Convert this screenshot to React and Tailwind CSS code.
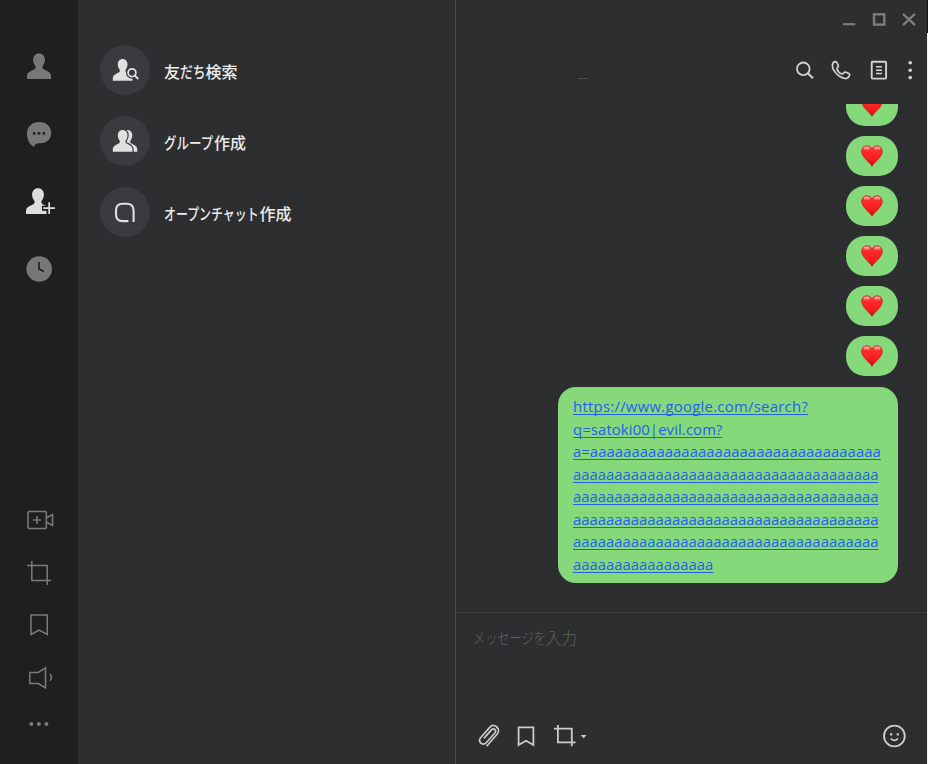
import React from 'react';

// Every icon is authored on one shared canvas; `box` selects the region it occupies.
function Icon({ box, className = '', children, stroke = 1.5 }) {
  const [, , w, h] = box.split(' ');
  return (
    <svg
      viewBox={box}
      width={w}
      height={h}
      fill="none"
      stroke="currentColor"
      strokeWidth={stroke}
      className={`block shrink-0 ${className}`}
    >
      {children}
    </svg>
  );
}

const PERSON =
  'M12 0C15.5 0 17.9 2.6 17.9 6.1C17.9 8.9 16.9 10.8 15.8 12.3C15.2 13.3 15.3 15 16.3 15.6C17.9 16.6 20.3 17.4 22 18.7C23.6 19.9 24 21.5 24 23.2V25.6H0V23.2C0 21.5 .4 19.9 2 18.7C3.7 17.4 6.1 16.6 7.7 15.6C8.7 15 8.8 13.3 8.2 12.3C7.1 10.8 6.1 8.9 6.1 6.1C6.1 2.6 8.5 0 12 0Z';

function Sidebar() {
  return (
    <nav className="flex w-[78px] shrink-0 flex-col justify-between bg-[#1f1f1f] pt-[50px] pb-[34px] text-[#777777]">
      <div className="flex flex-col gap-[38px]">
        <Icon box="0 50 78 30">
          <path d={PERSON} transform="translate(27 53.4)" fill="currentColor" stroke="none" />
        </Icon>
        <Icon box="0 118 78 30">
          <path
            d="M39.200 122C46.200 122 51.200 126.600 51.200 133C51.200 139.200 46.500 143.300 40.500 143.300C38 143.300 35.500 143.200 33.700 147C29.500 144 27 139.500 27 133.500C27 126.600 32.200 122 39.200 122Z"
            fill="currentColor"
            stroke="none"
          />
          <g fill="#1f1f1f" stroke="none">
            <circle cx="34.2" cy="133.4" r="1.4" />
            <circle cx="39" cy="133.400" r="1.4" />
            <circle cx="43.8" cy="133.400" r="1.4" />
          </g>
        </Icon>
        <Icon box="0 186 78 30" className="text-[#dedede]">
          <path d={PERSON} transform="translate(26 188.300)" fill="currentColor" stroke="none" />
          <path d="M42 208.200H56M49 201V216" stroke="#1f1f1f" strokeWidth="5" />
          <path d="M43.300 208.200H55M49.200 202.300V214" strokeWidth="1.700" />
        </Icon>
        <Icon box="0 254 78 30">
          <circle cx="39.200" cy="269" r="12.800" fill="currentColor" stroke="none" />
          <path d="M39 262V269L43.800 271.500" stroke="#1f1f1f" strokeWidth="1.700" />
        </Icon>
      </div>
      <div className="flex flex-col gap-[22px] text-[#7b7b7b]">
        <Icon box="0 505 78 30">
          <rect x="28" y="511.500" width="18.300" height="17" rx="1" />
          <path d="M33 520H41M37 516V524M46.300 518L52.500 514.500V525.500L46.300 522" />
        </Icon>
        <Icon box="0 557 78 30">
          <path d="M27 565.500H47.200V585M31.800 561V580.500H51" />
        </Icon>
        <Icon box="0 609 78 30">
          <path d="M31 615H47.300V634.500L39.100 630L31 634.500Z" />
        </Icon>
        <Icon box="0 661 78 30">
          <path d="M29.800 672.500H38.300L45.500 667.800V688L38.300 683.500H29.800ZM50 674Q52.800 677.300 50 680.700" />
        </Icon>
        <Icon box="0 713 78 17">
          <g fill="currentColor" stroke="none">
            <circle cx="31.400" cy="724" r="2" />
            <circle cx="38.900" cy="724" r="2" />
            <circle cx="46.400" cy="724" r="2" />
          </g>
        </Icon>
      </div>
    </nav>
  );
}

// Proportional kana run: glyphs are condensed to sit in `w` pixels.
function Kana({ w, scale, children }) {
  return (
    <span className="inline-block whitespace-nowrap" style={{ width: w }}>
      <span className="inline-block origin-left" style={{ transform: `scaleX(${scale})` }}>
        {children}
      </span>
    </span>
  );
}

function MenuRow({ icon, children }) {
  return (
    <li className="flex h-[50px] items-center gap-[14px]">
      <span className="flex size-[50px] items-center justify-center rounded-full bg-[#3a3b3e] text-[#e0e0e0]">
        {icon}
      </span>
      <span className="flex pt-[2px] text-[16px] leading-6 font-medium text-[#ececec]">{children}</span>
    </li>
  );
}

function FriendsPanel() {
  return (
    <section className="w-[377px] shrink-0 pt-[45px] pl-[22px]">
      <ul className="flex flex-col gap-[21px]">
        <MenuRow
          icon={
            <Icon box="100 45 50 50">
              <path d={PERSON} transform="translate(112.800 59) scale(.82 .85)" fill="currentColor" stroke="none" />
              <circle cx="132" cy="72.800" r="6" fill="#3a3b3e" stroke="none" />
              <path d="M134 75L139 80" stroke="#3a3b3e" strokeWidth="4.500" />
              <circle cx="132" cy="72.700" r="3.900" strokeWidth="1.700" />
              <path d="M134.800 75.500L138.300 79" strokeWidth="1.900" />
            </Icon>
          }
        >
          友<Kana w={25.5} scale={0.8}>だち</Kana>検索
        </MenuRow>
        <MenuRow
          icon={
            <Icon box="100 116 50 50">
              <path d={PERSON} transform="translate(117.600 130) scale(.82 .85)" fill="currentColor" stroke="none" />
              <path d={PERSON} transform="translate(112.800 130) scale(.82 .85)" fill="currentColor" stroke="#3a3b3e" strokeWidth="3" />
              <path d={PERSON} transform="translate(112.800 130) scale(.82 .85)" fill="currentColor" stroke="none" />
            </Icon>
          }
        >
          <Kana w={50} scale={0.78}>グループ</Kana>作成
        </MenuRow>
        <MenuRow
          icon={
            <Icon box="100 187.300 50 50" stroke="2.100">
              <path d="M133.600 222.300V211C133.600 206.300 131 204 126.500 204H122.800C118.300 204 116 206.400 116 210.800V214.500C116 219 118.300 221.400 122.800 221.400H128.400" />
            </Icon>
          }
        >
          <Kana w={95.5} scale={0.746}>オープンチャット</Kana>作成
        </MenuRow>
      </ul>
    </section>
  );
}

function Heart() {
  return (
    <svg width="22" height="22" viewBox="0 0 22 22" className="block">
      <defs>
        <linearGradient id="heartFill" x1="0" y1="0" x2="0" y2="1">
          <stop offset="0" stopColor="#f8423c" />
          <stop offset="0.3" stopColor="#fb2a28" />
          <stop offset="0.7" stopColor="#f51b1d" />
          <stop offset="1" stopColor="#c40c0e" />
        </linearGradient>
        <linearGradient id="heartShine" x1="0" y1="0" x2="0" y2="1">
          <stop offset="0" stopColor="#fff" stopOpacity="0.75" />
          <stop offset="1" stopColor="#fff" stopOpacity="0.050" />
        </linearGradient>
      </defs>
      <path
        d="M11 4.200C12 1.800 14 .8 16.200 .8C19.200 .8 21.300 3.200 21.300 6.300C21.300 12 14.500 16 11 21.200C7.500 16 .7 12 .7 6.300C.7 3.200 2.800 .8 5.800 .8C8 .8 10 1.800 11 4.200Z"
        fill="url(#heartFill)"
        stroke="#c91517"
        strokeWidth="0.700"
      />
      <ellipse cx="5.700" cy="3.400" rx="3.200" ry="1.900" fill="url(#heartShine)" />
      <ellipse cx="16.300" cy="3.400" rx="3.200" ry="1.900" fill="url(#heartShine)" />
    </svg>
  );
}

const LINES = [
  { text: 'https://www.google.com/search?', cls: 'tracking-[0.26px]' },
  { text: 'q=satoki00|evil.com?', cls: 'tracking-[0.1px]' },
  { text: 'a=' + 'a'.repeat(35), cls: 'tracking-[0.04px]' },
  { text: 'a'.repeat(37), cls: 'tracking-[-0.02px]' },
  { text: 'a'.repeat(37), cls: 'tracking-[-0.02px]' },
  { text: 'a'.repeat(37), cls: 'tracking-[-0.02px]' },
  { text: 'a'.repeat(37), cls: 'tracking-[-0.02px]' },
  { text: 'a'.repeat(17), cls: 'tracking-[-0.02px]' },
];

function Chat() {
  return (
    <main className="flex w-[472px] flex-col border-l border-[#4a4b4d]">
      <div className="flex h-[40px] shrink-0 justify-end text-[#7c7d7e]">
        <Icon box="836 0 91 40" stroke="2">
          <path d="M843 24.200H855.300" strokeWidth="2.200" />
          <rect x="874" y="14.300" width="10.300" height="10.300" strokeWidth="2.400" />
          <path d="M903 13.800L915 25.200M915 13.800L903 25.200" strokeWidth="2.300" />
        </Icon>
      </div>
      <header className="flex h-[64px] shrink-0 items-start justify-between pl-[122px] text-[#d2d2d2]">
        <span className="mt-[38px] h-px w-[10px] bg-[#4c4d4f]" />
        <Icon box="790 40 137 60" stroke="1.8">
          <circle cx="803.300" cy="68.800" r="6.300" />
          <path d="M808 73.500L813 78.300" strokeWidth="2.100" />
          <path
            d="M832.400 65.200C832.400 63.700 833.700 62 835.200 61.600C836.200 61.500 836.800 62.300 837.300 63.300L838.300 65.500C838.800 67 836.600 67.600 837 69C837.700 71.200 839.800 73.300 841.900 74C843.400 74.300 843.800 71.800 845.400 72L848.900 73.400C849.700 73.900 849.900 74.700 849.500 75.500C848.700 77.500 847.200 78.700 845.200 78.500C839 77.700 832.500 71 832.400 65.200Z"
            strokeWidth="1.700"
          />
          <rect x="871.700" y="61.800" width="14.400" height="16.800" rx="0.800" strokeWidth="1.900" />
          <path d="M876 66.800H882M876 70.200H882M876 73.600H882" strokeWidth="1.500" />
          <g fill="currentColor" stroke="none">
            <circle cx="910.200" cy="62.700" r="1.800" />
            <circle cx="910.200" cy="70.200" r="1.800" />
            <circle cx="910.200" cy="77.600" r="1.800" />
          </g>
        </Icon>
      </header>

      <div className="flex h-[508px] shrink-0 flex-col items-end justify-end gap-[10px] overflow-hidden pr-[29px] pb-[29.500px]">
        {[0, 1, 2, 3, 4, 5].map((i) => (
          <div
            key={i}
            className="flex h-[40px] w-[52px] shrink-0 items-center justify-center rounded-[19px] bg-[#86d97b]"
          >
            <Heart />
          </div>
        ))}
        <div className="mt-[0.500px] h-[196px] w-[340px] shrink-0 rounded-[18px] bg-[#86d97b] pt-[8.500px] pl-[15px] font-['Open_Sans','Noto_Sans',sans-serif] text-[14.900px] leading-[22.500px] text-[#2460f0]">
          {LINES.map((l, i) => (
            <div key={i} className="whitespace-nowrap">
              <span
                className={`underline decoration-1 underline-offset-2 [text-decoration-skip-ink:none] ${l.cls}`}
              >
                {l.text}
              </span>
            </div>
          ))}
        </div>
      </div>

      <footer className="flex min-h-0 flex-1 flex-col justify-between border-t border-[#3b3c3e]">
        <div className="flex pt-[12px] pl-[17px] text-[15.500px] leading-6 font-light text-[#606163]">
          <Kana w={73} scale={0.785}>メッセージを</Kana>入力
        </div>
        <div className="flex justify-between pb-[8px] text-[#cbcbcb]">
          <Icon box="456 716 140 40" stroke="1.700">
            <path
              d="M486.500 746.200L496.700 734.700C499 732 499 729 496.800 727C494.600 725 491.700 725.200 489.500 727.600L481 737.200C479.200 739.300 479.200 741.600 480.900 743.100C482.600 744.600 484.900 744.200 486.600 742.300L494.700 733.200C495.900 731.800 495.900 730.400 494.800 729.500C493.700 728.500 492.300 728.800 491.200 730.100L483.900 738.400"
              strokeLinejoin="round"
            />
            <path d="M518.600 727.300H533.400V745L526 740.700L518.600 745Z" strokeWidth="1.800" />
            <path d="M554 728.700H571.800V746.300M557.900 725V742.300H575.500" strokeWidth="1.800" />
            <path d="M580.600 735H586.600L583.600 738.200Z" fill="currentColor" stroke="none" />
          </Icon>
          <Icon box="867 716 60 40" stroke="1.900">
            <circle cx="894.400" cy="736" r="10.400" />
            <path d="M890.800 738.500Q894.400 742.400 898 738.500" strokeWidth="1.700" />
            <path d="M890 734.300H892.200M896.700 734.300H898.900" strokeWidth="2.200" />
          </Icon>
        </div>
      </footer>
    </main>
  );
}

export default function App() {
  return (
    <div className="flex h-[764px] w-[928px] overflow-hidden bg-[#2d2e30] font-['Noto_Sans_CJK_JP',sans-serif]">
      <Sidebar />
      <FriendsPanel />
      <Chat />
      <div className="w-px shrink-0 border-t-[33px] border-[#151515] bg-[#f2f2f2]" />
    </div>
  );
}
